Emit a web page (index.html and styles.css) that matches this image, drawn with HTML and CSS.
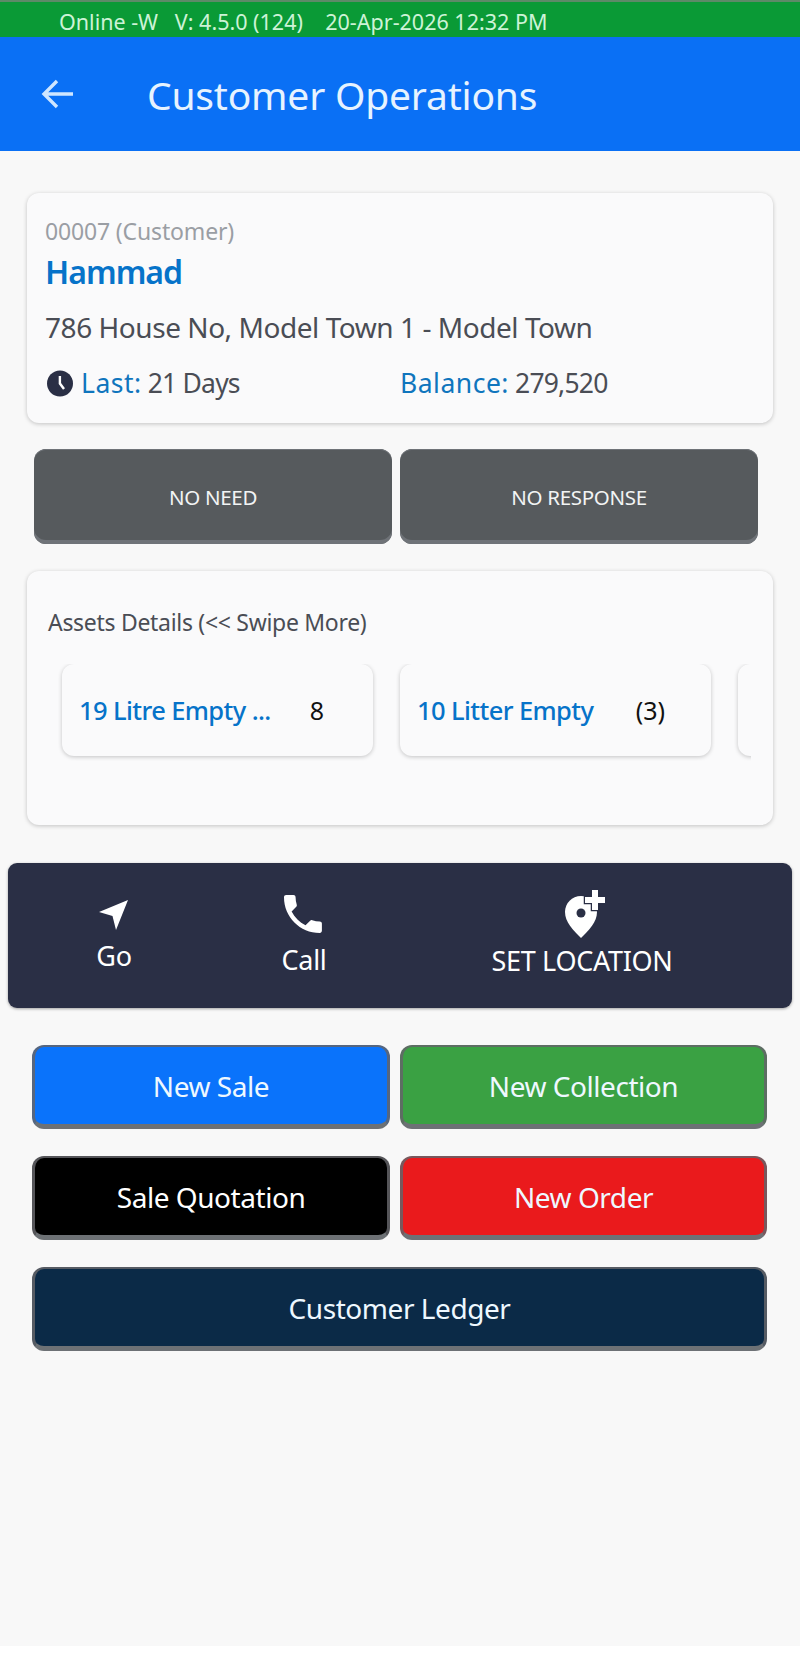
FILE: index.html
```html
<!DOCTYPE html>
<html lang="en">
<head>
<meta charset="utf-8">
<title>Customer Operations</title>
<link rel="stylesheet" href="styles.css">
</head>
<body>
<div class="status">Online -W&nbsp;&nbsp; V: 4.5.0 (124)&nbsp;&nbsp;&nbsp; 20-Apr-2026 12:32 PM</div>
<header class="appbar">
  <svg class="back" viewBox="0 0 34 32" aria-hidden="true"><path d="M32 16H3M16 3L3 16l13 13" fill="none" stroke="currentColor" stroke-width="3.4"/></svg>
  <h1 class="title">Customer Operations</h1>
</header>
<main class="content">
  <section class="card info">
    <div class="code">00007 (Customer)</div>
    <div class="name">Hammad</div>
    <div class="address">786 House No, Model Town 1 - Model Town</div>
    <div class="meta">
      <div class="meta-left">
        <svg class="clock" viewBox="0 0 24 24" aria-hidden="true"><circle cx="12" cy="12" r="12" fill="#2a2f45"/><path d="M10.800 5h2.200v6.600l3.600 4.800-1.800 1.300-4-5.300z" fill="#fff"/></svg>
        <span><span class="label">Last:</span> 21 Days</span>
      </div>
      <div class="meta-right"><span class="label">Balance:</span> 279,520</div>
    </div>
  </section>
  <div class="status-buttons">
    <button class="grey">NO NEED</button>
    <button class="grey">NO RESPONSE</button>
  </div>
  <section class="card assets">
    <div class="assets-title">Assets Details (&lt;&lt; Swipe More)</div>
    <div class="asset-row">
      <div class="asset"><span class="asset-name">19 Litre Empty ...</span><span class="asset-qty qty-a">8</span></div>
      <div class="asset"><span class="asset-name">10 Litter Empty</span><span class="asset-qty qty-b">(3)</span></div>
      <div class="asset"></div>
    </div>
  </section>
  <nav class="actions">
    <div class="action action-go">
      <svg class="icon-go" viewBox="0 0 30 30" aria-hidden="true"><path d="M29 0L17 30l-3.500-14L0 12z" fill="#fff"/></svg>
      <span>Go</span>
    </div>
    <div class="action action-call">
      <svg class="icon-call" viewBox="3 3 19 18" aria-hidden="true"><path d="M6.620 10.790c1.440 2.830 3.760 5.140 6.590 6.590l2.200-2.200c.27-.27.67-.36 1.020-.24 1.120.37 2.330.57 3.570.57.550 0 1 .450 1 1V20c0 .550-.450 1-1 1C10.610 21 3 13.390 3 4c0-.550.450-1 1-1h3.500c.550 0 1 .450 1 1 0 1.250.2 2.450.57 3.570.110.350.030.740-.250 1.020z" fill="#fff"/></svg>
      <span>Call</span>
    </div>
    <div class="action action-loc">
      <svg class="icon-loc" viewBox="0 0 42 48" aria-hidden="true"><path d="M17 6C8 6 1 13 1 22c0 10 8 18 16 26 8-8 16-16 16-26 0-9-7-16-16-16z" fill="#fff"/><circle cx="17" cy="23" r="4.500" fill="#2a2f45"/><path d="M28 0h6v7h7v6h-7v7h-6v-7h-7V7h7z" fill="#fff" stroke="#2a2f45" stroke-width="2.500" paint-order="stroke"/></svg>
      <span>SET LOCATION</span>
    </div>
  </nav>
  <div class="op-grid">
    <button class="op blue">New Sale</button>
    <button class="op green">New Collection</button>
    <button class="op black">Sale Quotation</button>
    <button class="op red">New Order</button>
    <button class="op navy wide">Customer Ledger</button>
  </div>
</main>
</body>
</html>
```

FILE: styles.css
```css
* { box-sizing: border-box; }
html, body { margin: 0; padding: 0; }
body {
  width: 800px;
  height: 1674px;
  overflow: hidden;
  background: #fff;
  font-family: "Noto Sans", "Open Sans", sans-serif;
  color: #4a4d55;
}
.status {
  height: 37px;
  padding: 7px 0 0 59px;
  background: #0a9a36;
  border-top: 2px solid #5d8a68;
  color: #cdf3d6;
  font-size: 21.500px;
  line-height: 26px;
  white-space: nowrap;
}
.appbar {
  height: 114px;
  display: flex;
  align-items: center;
  padding: 0 0 0 41px;
  background: #0a70f5;
  color: #e6f3ff;
}
.back { width: 34px; height: 32px; color: #cfe6ff; }
.title {
  margin: 0 0 0 72px;
  font-size: 39px;
  font-weight: 400;
  letter-spacing: -0.2px;
  white-space: nowrap;
}
.content { height: 1495px; padding: 42px 8px 0; background: #f8f8f8; }
.card {
  margin: 0 19px;
  background: #fafafb;
  border-radius: 12px;
  box-shadow: 0 1px 4px rgba(0, 0, 0, 0.22);
}
.info { height: 230px; padding: 23px 18px 0; }
.code { color: #9a9ea4; font-size: 23px; line-height: 30px; letter-spacing: -0.15px; }
.name { margin-top: 5px; color: #0673c9; font-size: 32px; line-height: 42px; font-weight: 600; letter-spacing: -1px; }
.address { margin-top: 15px; font-size: 28px; line-height: 38px; letter-spacing: -0.45px; }
.meta { display: flex; margin-top: 18px; font-size: 26.500px; line-height: 38px; letter-spacing: -0.8px; }
.meta-left { width: 355px; display: flex; align-items: center; gap: 8px; padding-left: 2px; white-space: pre; }
.meta-right { white-space: pre; }
.label { color: #0f75bd; letter-spacing: 0.5px; }
.clock { width: 26px; height: 27px; }
.status-buttons { display: flex; gap: 8px; margin: 26px 0 0 26px; }
button { font-family: inherit; border: 0; cursor: pointer; }
.grey {
  width: 358px;
  height: 95px;
  padding: 0;
  border-radius: 12px;
  background: #565a5d;
  box-shadow: inset 0 -4px 0 #6f7378, inset 0 1px 0 #6f7378;
  color: #f2f4f4;
  font-size: 20.500px;
  letter-spacing: -0.3px;
}
.assets { height: 254px; margin-top: 27px; padding: 37px 0 0 21px; }
.assets-title { font-size: 23px; line-height: 28px; letter-spacing: -0.3px; }
.asset-row {
  display: flex;
  gap: 27px;
  width: 703px;
  height: 110px;
  margin-top: 28px;
  padding: 0 0 0 14px;
  overflow: hidden;
}
.asset {
  flex: 0 0 311px;
  height: 92px;
  display: flex;
  align-items: center;
  border-radius: 12px;
  background: #fafafb;
  box-shadow: 0 1px 4px rgba(0, 0, 0, 0.22);
  font-size: 25.500px;
}
.asset-name { color: #0673c9; white-space: nowrap; letter-spacing: -0.6px; margin-left: 17px; font-weight: 500; }
.asset-qty { color: #111; margin-left: auto; font-size: 25px; }
.qty-a { margin-right: 49px; }
.qty-b { margin-right: 46px; }
.actions {
  display: flex;
  height: 145px;
  margin-top: 38px;
  background: #2a2f45;
  border-radius: 9px;
  box-shadow: 0 1px 3px rgba(0, 0, 0, 0.35);
  color: #fff;
  font-size: 27px;
  letter-spacing: -0.3px;
}
.action {
  display: flex;
  flex-direction: column;
  align-items: center;
}
.action-go { width: 212px; padding-top: 37px; }
.action-call { width: 168px; padding-top: 31px; }
.action-loc { width: 388px; padding-top: 27px; }
.action span { line-height: 36px; white-space: nowrap; }
.icon-go { width: 30px; height: 30px; margin-bottom: 8px; }
.icon-call { width: 40px; height: 40px; margin-bottom: 8px; }
.icon-loc { width: 42px; height: 48px; margin: 0 0 5px 5px; }
.op-grid {
  display: grid;
  grid-template-columns: 358px 367px;
  gap: 27px 10px;
  margin: 37px 0 0 24px;
}
.op {
  height: 84px;
  padding: 0;
  border-radius: 12px;
  border: 3px solid rgba(100, 100, 105, 0.85);
  border-top-width: 2px;
  border-bottom: 5px solid #6d7175;
  color: #eef8ff;
  font-size: 28px;
  letter-spacing: -0.45px;
}
.wide { grid-column: 1 / span 2; }
.blue { background: #0a73fb; }
.green { background: #3aa143; }
.black { background: #000; color: #fff; }
.red { background: #ea1a1c; }
.navy { background: #0b2a47; }
```
